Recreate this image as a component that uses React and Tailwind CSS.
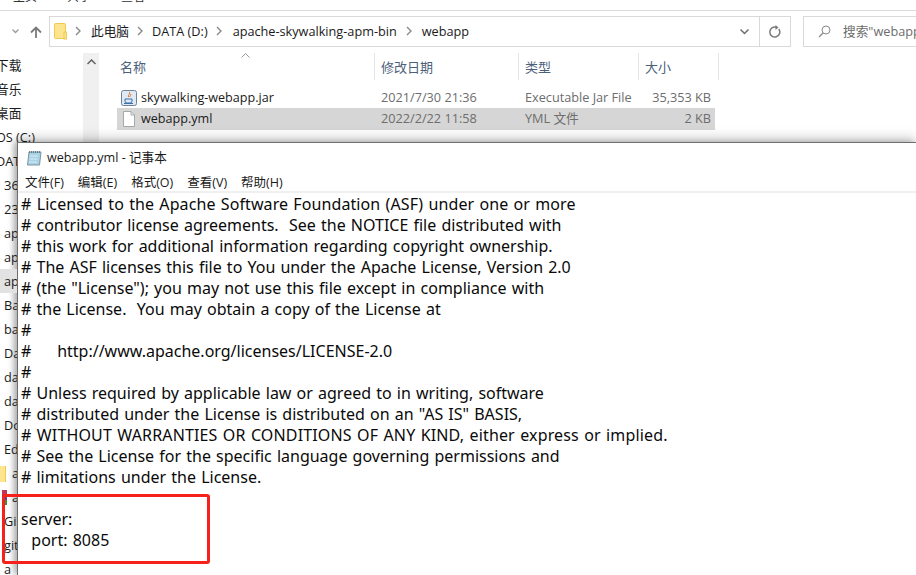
import React from "react";

const cjk = "font-['Open_Sans','Noto_Sans_CJK_SC',sans-serif]";

const sideItems = [
  { t: "36", cls: "text-[13px]" },
  { t: "23", cls: "text-[13px]" },
  { t: "ap" },
  { t: "ap" },
  { t: "ap", cls: "bg-[#e2e2e2]" },
  { t: "Ba" },
  { t: "ba" },
  { t: "Da" },
  { t: "da" },
  { t: "da" },
  { t: "Do" },
  { t: "Ed" },
  { t: "a", icon: "folder" },
  { t: "a", icon: "color" },
  { t: "Gi" },
  { t: "git" },
  { t: "a" },
];

const lines = [
  { t: "# Licensed to the Apache Software Foundation (ASF) under one or more", cls: "tracking-[0.09px]" },
  { t: "# contributor license agreements.  See the NOTICE file distributed with" },
  { t: "# this work for additional information regarding copyright ownership." },
  { t: "# The ASF licenses this file to You under the Apache License, Version 2.0" },
  { t: '# (the "License"); you may not use this file except in compliance with' },
  { t: "# the License.  You may obtain a copy of the License at" },
  { t: "#" },
  { t: "#     http://www.apache.org/licenses/LICENSE-2.0" },
  { t: "#" },
  { t: "# Unless required by applicable law or agreed to in writing, software" },
  { t: '# distributed under the License is distributed on an "AS IS" BASIS,' },
  { t: "# WITHOUT WARRANTIES OR CONDITIONS OF ANY KIND, either express or implied.", cls: "tracking-[0.15px]" },
  { t: "# See the License for the specific language governing permissions and" },
  { t: "# limitations under the License." },
  { t: "" },
  { t: "server:" },
  { t: "  port: 8085" },
];

function Chevron() {
  return (
    <svg width="6" height="10" viewBox="0 0 6 10" className="shrink-0">
      <path d="M1 1l4 4-4 4" fill="none" stroke="#8a8a8a" strokeWidth="1.4" />
    </svg>
  );
}

function FolderIcon() {
  return (
    <svg width="14" height="17" viewBox="0 0 14 17" className="shrink-0">
      <rect x="0.5" y="0.5" width="11" height="15" rx="1" fill="#fde48f" stroke="#f0c94e" />
      <rect x="10" y="9" width="2.5" height="7" fill="#fde48f" stroke="#f0c94e" />
    </svg>
  );
}

function JarIcon() {
  return (
    <svg width="16" height="16" viewBox="0 0 16 16" className="shrink-0">
      <rect x="0.5" y="0.5" width="15" height="15" rx="2" fill="#dfe9f3" stroke="#6f8398" />
      <path d="M8.5 2c1 2-2 3-1 5M10 4c0 1.500-1.500 2-1 3" fill="none" stroke="#d9752b" strokeWidth="1" />
      <path d="M4 9h7v2a2 2 0 0 1-2 2H6a2 2 0 0 1-2-2z M3 13.500h9" fill="none" stroke="#3f6fa8" strokeWidth="1" />
    </svg>
  );
}

function DocIcon() {
  return (
    <svg width="14" height="16" viewBox="0 0 14 16" className="shrink-0">
      <path d="M1.500 0.500h7.500l3.500 3.500v11.500h-11z" fill="#ffffff" stroke="#a8a8a8" />
      <path d="M9 0.500v3.500h3.500" fill="none" stroke="#a8a8a8" />
    </svg>
  );
}

function NotepadIcon() {
  return (
    <svg width="16" height="16" viewBox="0 0 16 16" className="shrink-0">
      <path d="M3 2h12l-1.500 13H1.500z" fill="#a9d3e4" stroke="#7c93a3" />
      <path d="M3 2h12" stroke="#55697a" strokeWidth="1.500" strokeDasharray="1 1" />
      <path d="M4 6h8M3.500 9h8M3 12h8" stroke="#d8edf5" />
    </svg>
  );
}

function HeaderCell({ label, width }) {
  return (
    <div className={`h-[27px] flex items-center pl-[6px] pt-[2px] border-r border-[#e5e5e5] ${width}`}>
      <span className="text-[13px] text-[#4c607a]">{label}</span>
    </div>
  );
}

function FileRow({ icon, name, date, type, size, selected, height }) {
  return (
    <div className={`flex items-center text-[12.7px] ${height} ${selected ? "bg-[#d6d6d6]" : ""}`}>
      <div className="w-[259px] flex items-center pl-[4px] gap-[4px]">
        <div className="w-[16px] flex justify-center">{icon}</div>
        <span className="text-[#1a1a1a] text-[12.6px]">{name}</span>
      </div>
      <span className="w-[144px] pl-[5px] text-[#6d6d6d]">{date}</span>
      <span className="w-[120px] pl-[5px] text-[#6d6d6d] whitespace-nowrap">{type}</span>
      <span className="w-[75px] text-right pr-[4px] text-[#6d6d6d]">{size}</span>
    </div>
  );
}

export default function App() {
  return (
    <div className={`relative w-[916px] h-[575px] overflow-hidden bg-white ${cjk}`}>
      {/* Clipped ribbon tabs */}
      <div className="h-[11px] border-b border-[#dcdcdc] overflow-hidden">
        <div className="flex gap-[30px] pl-[13px] -mt-[12px] text-[12px] text-[#333]">
          <span>主页</span>
          <span>共享</span>
          <span>查看</span>
        </div>
      </div>

      {/* Address row */}
      <div className="flex items-center h-[31px] mt-[5px]">
        <div className="w-[49px] flex items-center pl-[12px] gap-[11px] shrink-0">
          <svg width="7" height="5" viewBox="0 0 7 5">
            <path d="M0.500 0.500l3 3 3-3" fill="none" stroke="#9a9a9a" strokeWidth="1.300" />
          </svg>
          <svg width="12" height="12" viewBox="0 0 12 12">
            <path d="M6 12V1.500M1 6.500l5-5 5 5" fill="none" stroke="#7a7a7a" strokeWidth="1.800" />
          </svg>
        </div>
        <div className="w-[742px] h-[31px] border border-[#d9d9d9] flex items-center shrink-0">
          <div className="flex-1 flex items-center pl-[4px] text-[12.7px] text-[#1a1a1a]">
            <FolderIcon />
            <span className="ml-[7px]"><Chevron /></span>
            <span className="ml-[10px]">此电脑</span>
            <span className="ml-[8px]"><Chevron /></span>
            <span className="ml-[9px]">DATA (D:)</span>
            <span className="ml-[8px]"><Chevron /></span>
            <span className="ml-[11px]">apache-skywalking-apm-bin</span>
            <span className="ml-[9px]"><Chevron /></span>
            <span className="ml-[10px]">webapp</span>
          </div>
          <div className="w-[30px] flex justify-center">
            <svg width="9" height="6" viewBox="0 0 9 6">
              <path d="M0.500 0.500l4 4 4-4" fill="none" stroke="#6e6e6e" strokeWidth="1.500" />
            </svg>
          </div>
          <div className="w-[31px] h-full border-l border-[#d9d9d9] flex items-center justify-center">
            <svg width="12" height="13" viewBox="0 0 12 13">
              <path d="M9.800 4a5 5 0 1 1-2.300-1.700" fill="none" stroke="#7a7a7a" strokeWidth="1.500" />
              <path d="M6.500 0v5l3-2.500z" fill="#7a7a7a" />
            </svg>
          </div>
        </div>
        <div className="ml-[12px] flex-1 h-[31px] border border-[#d9d9d9] border-r-0 flex items-center pl-[14px] overflow-hidden">
          <svg width="13" height="13" viewBox="0 0 13 13" className="shrink-0">
            <circle cx="8" cy="5" r="4" fill="none" stroke="#8a8a8a" />
            <path d="M5 8l-4 4" stroke="#8a8a8a" strokeWidth="1.200" />
          </svg>
          <span className="ml-[12px] text-[12.7px] text-[#6d6d6d] whitespace-nowrap">搜索"webapp"</span>
        </div>
      </div>

      {/* Explorer body */}
      <div className="flex mt-[6px]">
        {/* Navigation pane */}
        <div className="w-[83px] shrink-0 h-[527px] overflow-hidden text-[12.7px] text-[#1a1a1a]">
          <div className="flex flex-col -ml-[4px]">
            <span className="h-[24px] leading-[24px]">下载</span>
            <span className="h-[24px] leading-[24px]">音乐</span>
            <span className="h-[24px] leading-[24px]">桌面</span>
            <span className="h-[24px] leading-[24px] whitespace-nowrap">OS (C:)</span>
            <span className="h-[24px] leading-[24px] whitespace-nowrap">DATA (D:)</span>
          </div>
        </div>
        {/* Scrollbar */}
        <div className="w-[16px] shrink-0 h-[92px] bg-[#f0f0f0] flex justify-center pt-[6px]">
          <svg width="9" height="6" viewBox="0 0 9 6">
            <path d="M0.500 5l4-4 4 4" fill="none" stroke="#606060" strokeWidth="1.500" />
          </svg>
        </div>
        {/* File list */}
        <div className="ml-[7px] flex-1 relative">
          <span className="absolute left-[135px] top-0">
            <svg width="9" height="5" viewBox="0 0 9 5">
              <path d="M0.500 4.500l4-4 4 4" fill="none" stroke="#9a9a9a" />
            </svg>
          </span>
          <div className="flex ml-[8px]">
            <HeaderCell label="名称" width="w-[261px]" />
            <HeaderCell label="修改日期" width="w-[144px]" />
            <HeaderCell label="类型" width="w-[120px]" />
            <HeaderCell label="大小" width="w-[80px]" />
          </div>
          <div className="w-[598px] ml-[11px] mt-[8px]">
            <FileRow height="h-[20px]" icon={<JarIcon />} name="skywalking-webapp.jar" date="2021/7/30 21:36" type="Executable Jar File" size="35,353 KB" />
            <FileRow height="h-[22px]" icon={<DocIcon />} name="webapp.yml" date="2022/2/22 11:58" type="YML 文件" size="2 KB" selected />
          </div>
        </div>
      </div>

      {/* Notepad window */}
      <div className="absolute left-[17px] top-[142px] right-0 bottom-0 bg-white border-t border-l border-[#6e6e6e] shadow-[0_-6px_10px_rgba(0,0,0,0.14),-3px_0_6px_rgba(0,0,0,0.28)]">
        <div className="h-[30px] flex items-center pl-[8px] gap-[5px]">
          <NotepadIcon />
          <span className="text-[12.6px] text-[#1a1a1a] whitespace-nowrap">webapp.yml - 记事本</span>
        </div>
        <div className="h-[18px] flex items-center pt-[2px] pl-[7px] gap-[14px] text-[12.5px] text-[#1a1a1a]">
          <span>文件(F)</span>
          <span>编辑(E)</span>
          <span>格式(O)</span>
          <span>查看(V)</span>
          <span>帮助(H)</span>
        </div>
        <div className="h-[2px] bg-[#f0f0f0]" />
        <pre className="pl-[3px] pt-[1px] text-[16px] leading-[21px] [word-spacing:1px] text-[#0a0a0a] font-['Noto_Sans','Noto_Sans_CJK_SC',sans-serif]">
          {lines.map((l, i) => (
            <div key={i} className={`h-[21px] ${l.cls || ""}`}>{l.t}</div>
          ))}
        </pre>
      </div>

      {/* Sidebar peeking out left of notepad */}
      <div className="absolute left-0 top-[173px] w-[17px] overflow-hidden flex flex-col text-[12.7px] text-[#1a1a1a]">
        {sideItems.map((s, i) => (
          <div key={i} className={`relative h-[24px] leading-[24px] pl-[4px] whitespace-nowrap ${s.cls || ""}`}>
            {s.icon === "folder" && (
              <>
                <span className="absolute left-0 top-[5px] w-[6px] h-[16px] bg-[#fde48f] border-r border-[#f0c94e]" />
                <span className="pl-[8px]">{s.t}</span>
              </>
            )}
            {s.icon === "color" && (
              <>
                <span className="absolute left-[2px] top-[5px] w-[5px] h-[5px] bg-[#c2335a]" />
                <span className="absolute left-[2px] top-[10px] w-[5px] h-[5px] bg-[#5b3fa8]" />
                <span className="absolute left-[2px] top-[15px] w-[5px] h-[5px] bg-[#3a8f3a]" />
                <span className="pl-[8px]">{s.t}</span>
              </>
            )}
            {!s.icon && s.t}
          </div>
        ))}
      </div>

      {/* Red annotation */}
      <div className="absolute left-[2px] top-[494px] w-[208px] h-[70px] border-[3px] border-[#f5211a] rounded-[3px]" />
    </div>
  );
}
